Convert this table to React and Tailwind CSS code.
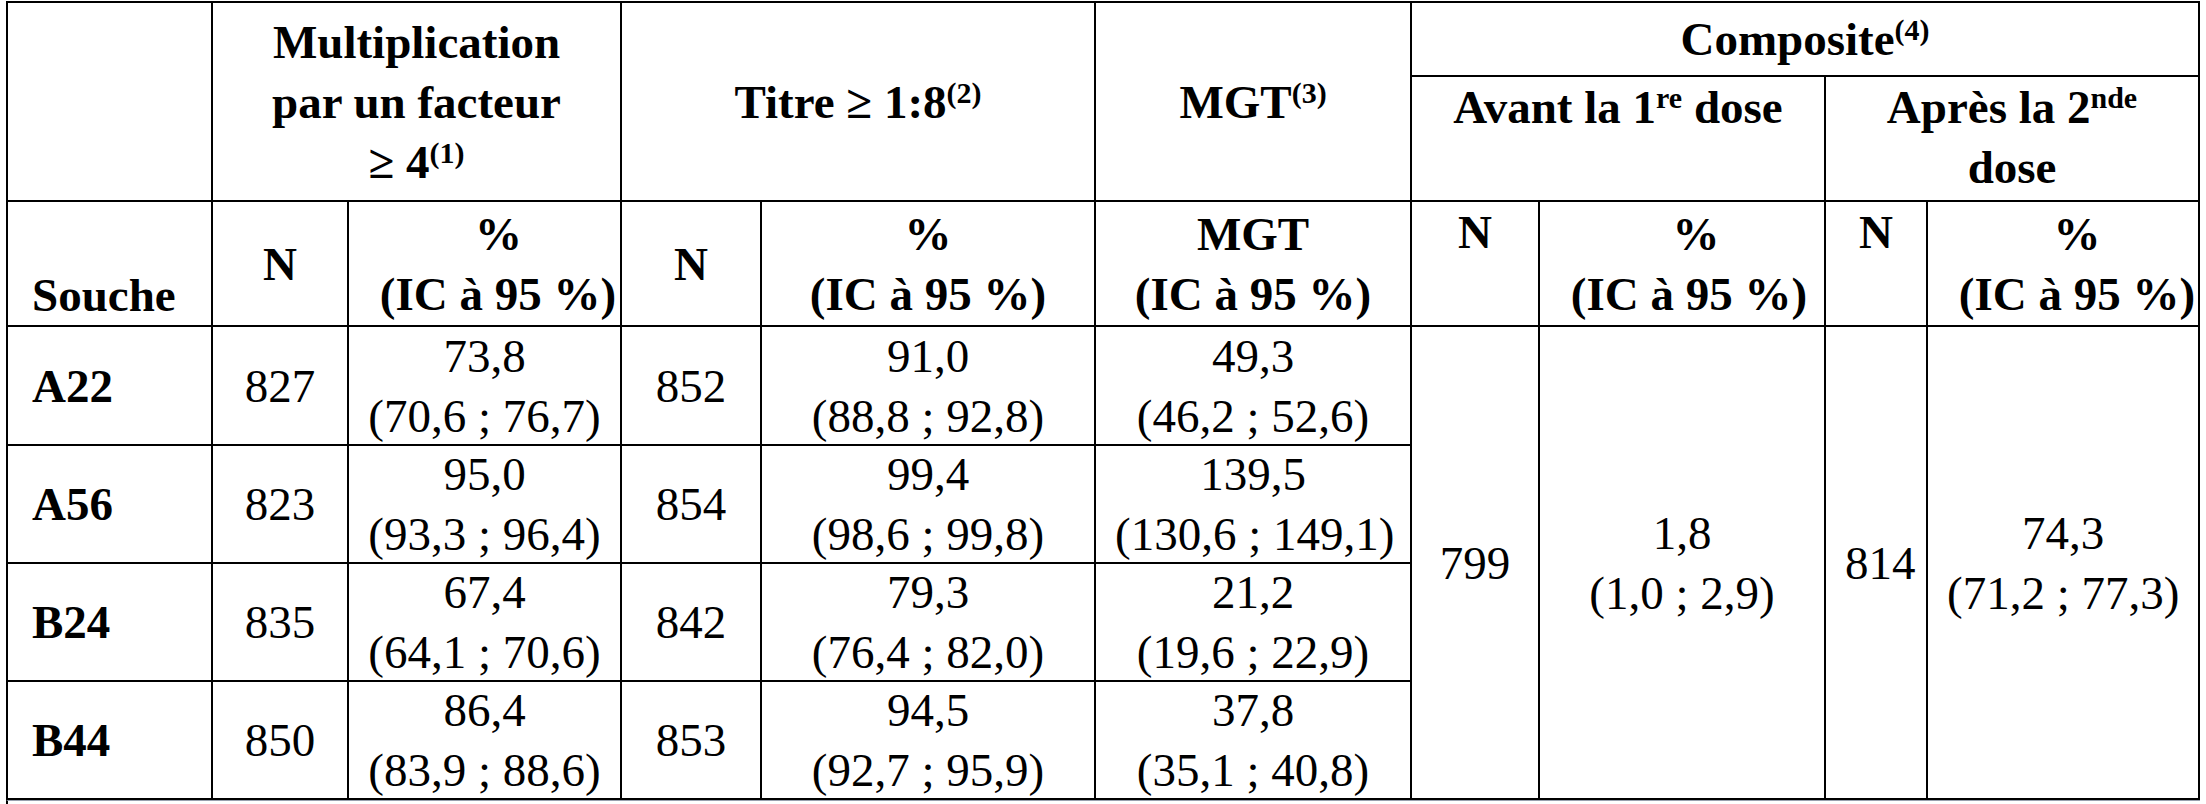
import React from 'react'

const rows = [
  {
    souche: 'A22',
    n1: '827',
    p1: ['73,8', '(70,6 ; 76,7)'],
    n2: '852',
    p2: ['91,0', '(88,8 ; 92,8)'],
    mgt: ['49,3', '(46,2 ; 52,6)'],
  },
  {
    souche: 'A56',
    n1: '823',
    p1: ['95,0', '(93,3 ; 96,4)'],
    n2: '854',
    p2: ['99,4', '(98,6 ; 99,8)'],
    mgt: ['139,5', '(130,6 ; 149,1)'],
  },
  {
    souche: 'B24',
    n1: '835',
    p1: ['67,4', '(64,1 ; 70,6)'],
    n2: '842',
    p2: ['79,3', '(76,4 ; 82,0)'],
    mgt: ['21,2', '(19,6 ; 22,9)'],
  },
  {
    souche: 'B44',
    n1: '850',
    p1: ['86,4', '(83,9 ; 88,6)'],
    n2: '853',
    p2: ['94,5', '(92,7 ; 95,9)'],
    mgt: ['37,8', '(35,1 ; 40,8)'],
  },
]

const rowHeights = ['h-[119px]', 'h-[118px]', 'h-[118px]', 'h-[118px]']

// every cell shares the same rule, padding and face
const cell =
  "border-2 border-black px-[19px] py-0 text-center font-['Liberation_Serif','Times_New_Roman',serif] text-[47px] leading-[60px]"

const Sup = ({ children }) => (
  <sup className="text-[30px] leading-none">{children}</sup>
)

const Pair = ({ lines }) => (
  <div className="-my-[2px]">
    <div className="whitespace-nowrap">{lines[0]}</div>
    <div className="whitespace-nowrap">{lines[1]}</div>
  </div>
)

// "%" header, the narrow columns have a leading space before (IC ...)
const PctHead = ({ narrow }) => (
  <div>
    <div className={narrow ? 'pl-7' : ''}>%</div>
    <div className="whitespace-nowrap text-left">
      {narrow ? '\u00a0' : ''}(IC à 95 %)
    </div>
  </div>
)

export default function App() {
  return (
    <div className="min-h-[804px] w-[2206px] bg-white pt-[1px] font-['Liberation_Serif','Times_New_Roman',serif] text-black">
      <table className="ml-[6px] w-[2194px] table-fixed border-collapse font-['Liberation_Serif','Times_New_Roman',serif] text-[47px] leading-[60px]">
        <colgroup>
          <col className="w-[205px]" />
          <col className="w-[136px]" />
          <col className="w-[273px]" />
          <col className="w-[140px]" />
          <col className="w-[334px]" />
          <col className="w-[316px]" />
          <col className="w-[128px]" />
          <col className="w-[286px]" />
          <col className="w-[102px]" />
          <col className="w-[272px]" />
        </colgroup>
        <thead>
          <tr className="h-[74px]">
            <th rowSpan={2} className={cell} />
            <th colSpan={2} rowSpan={2} className={cell + ' align-middle font-bold'}>
              <div className="whitespace-nowrap">Multiplication</div>
              <div className="whitespace-nowrap">par un facteur</div>
              <div className="whitespace-nowrap">
                ≥ 4<Sup>(1)</Sup>
              </div>
            </th>
            <th colSpan={2} rowSpan={2} className={cell + ' align-middle font-bold'}>
              Titre ≥ 1:8<Sup>(2)</Sup>
            </th>
            <th rowSpan={2} className={cell + ' align-middle font-bold'}>
              MGT<Sup>(3)</Sup>
            </th>
            <th colSpan={4} className={cell + ' align-middle font-bold'}>
              Composite<Sup>(4)</Sup>
            </th>
          </tr>
          <tr className="h-[125px]">
            <th colSpan={2} className={cell + ' align-top font-bold'}>
              <span className="whitespace-nowrap">
                Avant la 1<Sup>re</Sup> dose
              </span>
            </th>
            <th colSpan={2} className={cell + ' align-top font-bold'}>
              <div className="whitespace-nowrap">
                Après la 2<Sup>nde</Sup>
              </div>
              <div>dose</div>
            </th>
          </tr>
          <tr className="h-[125px]">
            <th className={cell + ' pl-[24px] text-left align-bottom font-bold'}>
              Souche
            </th>
            <th className={cell + ' align-middle font-bold'}>N</th>
            <th className={cell + ' align-middle font-bold'}>
              <PctHead narrow />
            </th>
            <th className={cell + ' align-middle font-bold'}>N</th>
            <th className={cell + ' align-middle font-bold'}>
              <div>%</div>
              <div className="whitespace-nowrap">(IC à 95 %)</div>
            </th>
            <th className={cell + ' align-middle font-bold'}>
              <div>MGT</div>
              <div className="whitespace-nowrap">(IC à 95 %)</div>
            </th>
            <th className={cell + ' align-top font-bold'}>N</th>
            <th className={cell + ' align-middle font-bold'}>
              <PctHead narrow />
            </th>
            <th className={cell + ' align-top font-bold'}>N</th>
            <th className={cell + ' align-middle font-bold'}>
              <PctHead narrow />
            </th>
          </tr>
        </thead>
        <tbody>
          {rows.map((row, index) => (
            <tr key={row.souche} className={rowHeights[index]}>
              <td className={cell + ' pl-[24px] text-left align-middle font-bold'}>
                {row.souche}
              </td>
              <td className={cell + ' align-middle font-normal'}>{row.n1}</td>
              <td className={cell + ' align-middle font-normal'}>
                <Pair lines={row.p1} />
              </td>
              <td className={cell + ' align-middle font-normal'}>{row.n2}</td>
              <td className={cell + ' align-middle font-normal'}>
                <Pair lines={row.p2} />
              </td>
              <td className={cell + ' align-middle font-normal'}>
                <Pair lines={row.mgt} />
              </td>
              {index === 0 ? (
                <>
                  <td rowSpan={4} className={cell + ' align-middle font-normal'}>
                    799
                  </td>
                  <td rowSpan={4} className={cell + ' align-middle font-normal'}>
                    <Pair lines={['1,8', '(1,0 ; 2,9)']} />
                  </td>
                  <td rowSpan={4} className={cell + ' align-middle font-normal'}>
                    814
                  </td>
                  <td rowSpan={4} className={cell + ' align-middle font-normal'}>
                    <Pair lines={['74,3', '(71,2 ; 77,3)']} />
                  </td>
                </>
              ) : null}
            </tr>
          ))}
        </tbody>
      </table>
      <div className="ml-[6px] h-[4px] w-[2194px] border-l-2 border-t border-l-black border-t-gray-400" />
    </div>
  )
}
